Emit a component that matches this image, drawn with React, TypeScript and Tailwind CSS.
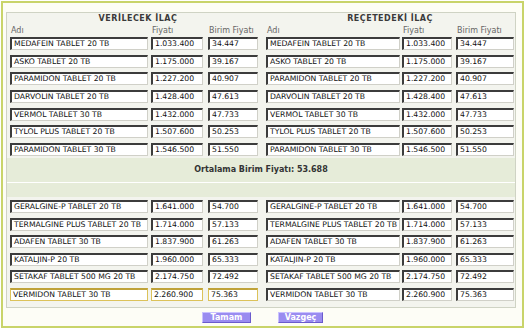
const verilecekUst = [
  ["MEDAFEIN TABLET 20 TB", "1.033.400", "34.447"],
  ["ASKO TABLET 20 TB", "1.175.000", "39.167"],
  ["PARAMIDON TABLET 20 TB", "1.227.200", "40.907"],
  ["DARVOLIN TABLET 20 TB", "1.428.400", "47.613"],
  ["VERMOL TABLET 30 TB", "1.432.000", "47.733"],
  ["TYLOL PLUS TABLET 20 TB", "1.507.600", "50.253"],
  ["PARAMIDON TABLET 30 TB", "1.546.500", "51.550"],
];

const verilecekAlt = [
  ["GERALGINE-P TABLET 20 TB", "1.641.000", "54.700"],
  ["TERMALGINE PLUS TABLET 20 TB", "1.714.000", "57.133"],
  ["ADAFEN TABLET 30 TB", "1.837.900", "61.263"],
  ["KATALJIN-P 20 TB", "1.960.000", "65.333"],
  ["SETAKAF TABLET 500 MG 20 TB", "2.174.750", "72.492"],
  ["VERMIDON TABLET 30 TB", "2.260.900", "75.363"],
];

const Field = ({
  value,
  width,
  active = false,
}: {
  value: string;
  width: string;
  active?: boolean;
}) => (
  <div
    className={`${width} h-[13px] shrink-0 overflow-hidden whitespace-nowrap bg-white pl-[2px] text-[7.7px] leading-[10px] text-[#111] ${
      active
        ? "border border-[#dcc25a] border-t-2 border-t-[#bfa23a]"
        : "border-t-2 border-l-2 border-r border-b border-t-[#3c3c3c] border-l-[#3c3c3c] border-r-[#d0d0c8] border-b-[#d0d0c8]"
    }`}
  >
    {value}
  </div>
);

const Row = ({ item, active = false }: { item: string[]; active?: boolean }) => (
  <div className="flex items-start">
    <Field value={item[0]} width="w-[138px]" active={active} />
    <div className="w-[3px] shrink-0" />
    <Field value={item[1]} width="w-[52px]" active={active} />
    <div className="w-[5px] shrink-0" />
    <Field value={item[2]} width="w-[50px]" active={active} />
    <div className="w-[8px] shrink-0" />
    <Field value={item[0]} width="w-[134px]" />
    <div className="w-[2px] shrink-0" />
    <Field value={item[1]} width="w-[50px]" />
    <div className="w-[4px] shrink-0" />
    <Field value={item[2]} width="w-[58px]" />
  </div>
);

const App = () => {
  return (
    <div
      className="w-[526px] h-[330px] bg-white pt-px pl-px"
      style={{ fontFamily: '"DejaVu Sans", Verdana, sans-serif' }}
    >
      <div className="w-[523px] h-[327px] border-2 border-[#c9d46a] bg-[#fdfdf6] pl-[3px] pt-[9px]">
        <div className="w-[510px] h-[296px] border border-[#cfd3c4] bg-[#f3f4ee]">
          {/* basliklar */}
          <div className="flex h-[12px] items-center pl-[3px] text-[8px] font-bold tracking-[0.5px] text-[#3a3a3a]">
            <div className="w-[256px] text-center">VERİLECEK İLAÇ</div>
            <div className="w-[248px] text-center">REÇETEDEKİ İLAÇ</div>
          </div>
          <div className="flex h-[11px] items-center pl-[4px] text-[8px] text-[#666]">
            <div className="w-[141px]">Adı</div>
            <div className="w-[57px]">Fiyatı</div>
            <div className="w-[58px]">Birim Fiyatı</div>
            <div className="w-[136px]">Adı</div>
            <div className="w-[54px]">Fiyatı</div>
            <div>Birim Fiyatı</div>
          </div>

          <div className="mt-px flex h-[121px] flex-col gap-[4.65px] pl-[3px]">
            {verilecekUst.map((item) => (
              <Row key={item[0]} item={item} />
            ))}
          </div>

          <div className="flex h-[25px] items-center justify-center border-b border-white bg-[#e6ecd9] text-[8px] font-bold text-[#333]">
            Ortalama Birim Fiyatı: 53.688
          </div>
          <div className="h-[14px] bg-[#e6ecd9]" />

          <div className="mt-[3px] flex flex-col gap-[4.6px] pl-[3px]">
            {verilecekAlt.map((item, i) => (
              <Row key={item[0]} item={item} active={i === verilecekAlt.length - 1} />
            ))}
          </div>
        </div>

        <div className="mt-[4px] flex pl-[196px]">
          <button className="h-[11px] w-[49px] border border-t-[#c9c1ff] border-l-[#c9c1ff] border-r-[#6a5bcc] border-b-[#6a5bcc] bg-[#9a8cf0] text-[8px] leading-[9px] font-bold text-white">
            Tamam
          </button>
          <button className="ml-[27px] h-[11px] w-[45px] border border-t-[#c9c1ff] border-l-[#c9c1ff] border-r-[#6a5bcc] border-b-[#6a5bcc] bg-[#9a8cf0] text-[8px] leading-[9px] font-bold text-white">
            Vazgeç
          </button>
        </div>
      </div>
    </div>
  );
};

export default App;
